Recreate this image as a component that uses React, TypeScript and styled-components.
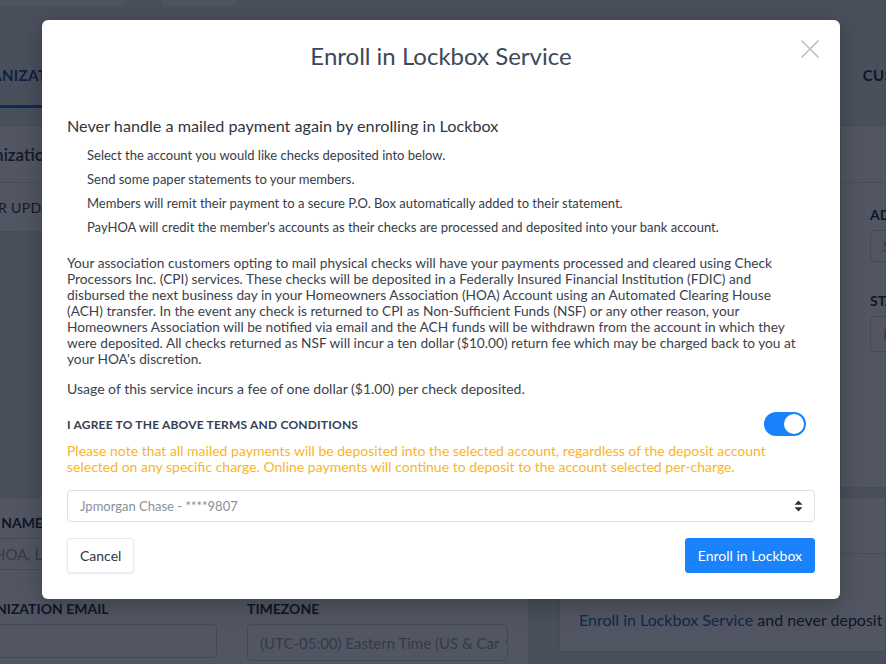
import React, { useState } from 'react';
import styled, { createGlobalStyle } from 'styled-components';

const GlobalStyle = createGlobalStyle`
  html, body {
    margin: 0;
    padding: 0;
  }
  body {
    font-family: Lato, "Liberation Sans", Arial, sans-serif;
    background: #e3e6eb;
  }
  * {
    box-sizing: border-box;
  }
`;

/* ---------- page behind the dialog ---------- */

const Page = styled.div`
  position: relative;
  width: 886px;
  height: 664px;
  overflow: hidden;
  background: #e3e6eb;
`;

const TopStrip = styled.div`
  display: flex;
  gap: 37px;
  height: 8px;
`;

const TopStub = styled.div<{ $w: number }>`
  width: ${p => p.$w}px;
  height: 6px;
  background: #f7f8fa;
  border-radius: 0 0 4px 4px;
`;

const TabBar = styled.div`
  display: flex;
  justify-content: space-between;
  align-items: flex-end;
  width: 1033px;
  height: 100px;
  margin-left: -42px;
`;

const Tab = styled.div<{ $active?: boolean }>`
  padding-bottom: 22px;
  line-height: 16px;
  font-size: 15px;
  font-weight: 700;
  letter-spacing: 0.3px;
  color: ${p => (p.$active ? '#1d4f91' : '#1f2a3d')};
  border-bottom: 3px solid ${p => (p.$active ? '#1d6fd6' : 'transparent')};
`;

const UpperGrid = styled.div`
  display: grid;
  grid-template-columns: 910px 1fr;
  margin-left: -70px;
  margin-top: 17px;
  height: 372px;
  align-items: start;
`;

const LowerGrid = styled.div`
  display: grid;
  grid-template-columns: 595px minmax(0, 1fr);
  margin-left: -67px;
`;

const Card = styled.div`
  background: #ffffff;
  border: 1px solid #dde1e7;
`;

const CardHeader = styled.div<{ $inset?: number }>`
  height: 57px;
  display: flex;
  align-items: center;
  padding: 0 28px 0 ${p => p.$inset ?? 28}px;
  font-size: 17px;
  font-weight: 600;
  color: #2a3446;
  border-bottom: 1px solid #dde1e7;
`;

const CardRow = styled.div<{ $inset?: number }>`
  height: 48px;
  display: flex;
  align-items: center;
  padding: 0 28px 0 ${p => p.$inset ?? 28}px;
  font-size: 14px;
  letter-spacing: 0.4px;
  color: #2a3446;
`;

const SideCard = styled(Card)`
  height: 363px;
`;

const SideBody = styled.div`
  padding: 23px 29px;
  display: flex;
  flex-direction: column;
`;

const FieldLabel = styled.div`
  font-size: 14px;
  font-weight: 700;
  line-height: 18px;
  color: #1f2a3d;
  margin-bottom: 6px;
`;

const FieldBox = styled.div<{ $h?: number }>`
  height: ${p => p.$h ?? 32}px;
  border: 1px solid #cfd4dc;
  border-radius: 4px;
  padding: 0 12px;
  display: flex;
  align-items: center;
  justify-content: space-between;
  gap: 6px;
  font-size: 15px;
  color: #9aa1ad;
  margin-bottom: 30px;
  white-space: nowrap;
  overflow: hidden;
`;

const FormCard = styled(Card)`
  padding: 16px 20px 0 22px;
  border-right: none;
`;

const FormRow = styled.div`
  display: grid;
  grid-template-columns: minmax(0, 1fr) minmax(0, 1fr);
  column-gap: 30px;
`;

const RightCol = styled.div`
  padding-left: 31px;
`;

const PromoCard = styled(Card)`
  height: 155px;
  box-shadow: 0 1px 3px rgba(0, 0, 0, 0.08);
  display: flex;
  flex-direction: column;
`;

const PromoHead = styled.div`
  height: 56px;
  border-bottom: 1px solid #dde1e7;
`;

const PromoText = styled.div`
  padding: 56px 19px 0;
  font-size: 16px;
  color: #1f2a3d;
  white-space: nowrap;

  a {
    color: #2264c4;
    text-decoration: none;
  }
`;

/* ---------- overlay + dialog ---------- */

const Overlay = styled.div`
  position: absolute;
  inset: 0;
  background: rgba(9, 14, 31, 0.7);
`;

const Dialog = styled.div`
  position: absolute;
  left: 42px;
  top: 20px;
  width: 798px;
  background: #ffffff;
  border-radius: 6px;
  box-shadow: 0 6px 24px rgba(0, 0, 0, 0.25);
  padding: 22px 25px 26px;
`;

const Title = styled.h2`
  margin: 0;
  text-align: center;
  font-size: 24px;
  line-height: 28px;
  font-weight: 400;
  color: #3b495b;
`;

const CloseButton = styled.button`
  position: absolute;
  top: 18px;
  right: 19px;
  width: 22px;
  height: 22px;
  padding: 0;
  border: none;
  background: none;
  cursor: pointer;
  display: flex;
  align-items: center;
  justify-content: center;
`;

const Lead = styled.h3`
  margin: 46px 0 0;
  font-size: 16.2px;
  line-height: 20px;
  font-weight: 400;
  color: #2f3640;
`;

const Steps = styled.ul`
  list-style: none;
  margin: 10px 0 0;
  padding: 0 0 0 20px;
`;

const Step = styled.li`
  font-size: 13px;
  line-height: 18px;
  color: #353c47;
  margin-bottom: 6px;
`;

const Terms = styled.p<{ $gap: number; $size: number }>`
  max-width: 740px;
  margin: ${p => p.$gap}px 0 0;
  font-size: ${p => p.$size}px;
  line-height: 16px;
  color: #3b424d;
`;

const AgreeRow = styled.div`
  margin-top: 15px;
  display: flex;
  align-items: center;
  justify-content: space-between;
  padding-right: 9px;
`;

const AgreeLabel = styled.span`
  font-size: 12px;
  font-weight: 700;
  letter-spacing: 0.2px;
  color: #354155;
`;

const Toggle = styled.button<{ $on: boolean }>`
  width: 42px;
  height: 24px;
  padding: 2px;
  border: none;
  border-radius: 12px;
  background: ${p => (p.$on ? '#1a82fb' : '#cfd4dc')};
  display: flex;
  justify-content: ${p => (p.$on ? 'flex-end' : 'flex-start')};
  cursor: pointer;
`;

const Knob = styled.span`
  width: 20px;
  height: 20px;
  border-radius: 50%;
  background: #ffffff;
`;

const Notice = styled.p`
  margin: 7px 0 0;
  font-size: 14px;
  line-height: 16px;
  color: #f7b52c;
`;

const SelectWrap = styled.div`
  position: relative;
  margin-top: 15px;
`;

const AccountSelect = styled.select`
  width: 100%;
  height: 32px;
  appearance: none;
  border: 1px solid #dcdfe4;
  border-radius: 4px;
  background: #ffffff;
  padding: 0 12px;
  font-family: inherit;
  font-size: 13px;
  color: #8b9099;
`;

const SelectArrows = styled.svg`
  position: absolute;
  right: 12px;
  top: 10px;
  pointer-events: none;
`;

const Actions = styled.div`
  margin-top: 16px;
  display: flex;
  justify-content: space-between;
`;

const Button = styled.button<{ $primary?: boolean }>`
  height: 35px;
  padding: 0 12px;
  border-radius: 3px;
  font-family: inherit;
  font-size: 14px;
  cursor: pointer;
  border: 1px solid ${p => (p.$primary ? '#1a82fb' : '#e6e8ec')};
  background: ${p => (p.$primary ? '#1a82fb' : '#ffffff')};
  color: ${p => (p.$primary ? '#ffffff' : '#2f3640')};
  box-shadow: ${p => (p.$primary ? 'none' : '0 1px 2px rgba(0, 0, 0, 0.08)')};
`;

const steps = [
  'Select the account you would like checks deposited into below.',
  'Send some paper statements to your members.',
  'Members will remit their payment to a secure P.O. Box automatically added to their statement.',
  "PayHOA will credit the member's accounts as their checks are processed and deposited into your bank account.",
];

const App: React.FC = () => {
  const [agreed, setAgreed] = useState(true);

  return (
    <Page>
      <GlobalStyle />

      <TopStrip>
        <TopStub $w={125} />
        <TopStub $w={74} />
      </TopStrip>

      <TabBar>
        <Tab $active>ORGANIZATION</Tab>
        <Tab>BANK ACCOUNTS</Tab>
        <Tab>LOCKBOX</Tab>
        <Tab>CUSTOMIZATION</Tab>
      </TabBar>

      <UpperGrid>
        <Card>
          <CardHeader $inset={26}>Organization Settings</CardHeader>
          <CardRow $inset={36}>YOUR UPDATES</CardRow>
        </Card>
        <SideCard>
          <CardHeader />
          <SideBody>
            <FieldLabel>ADDRESS</FieldLabel>
            <FieldBox>Street</FieldBox>
            <FieldLabel>STATE</FieldLabel>
            <FieldBox $h={36}>Kansas</FieldBox>
          </SideBody>
        </SideCard>
      </UpperGrid>

      <LowerGrid>
        <FormCard>
          <FieldLabel>LEGAL NAME</FieldLabel>
          <FieldBox>My HOA, LLC</FieldBox>
          <FormRow>
            <div>
              <FieldLabel>ORGANIZATION EMAIL</FieldLabel>
              <FieldBox $h={34} />
            </div>
            <div>
              <FieldLabel>TIMEZONE</FieldLabel>
              <FieldBox $h={37}>
                (UTC-05:00) Eastern Time (US &amp; Car
                <svg width="10" height="10" viewBox="0 0 10 10" style={{ flexShrink: 0 }}>
                  <path d="M1.5 3.5 L5 7 L8.5 3.5" fill="none" stroke="#333" strokeWidth="1.4" />
                </svg>
              </FieldBox>
            </div>
          </FormRow>
        </FormCard>
        <RightCol>
          <PromoCard>
            <PromoHead />
            <PromoText>
              <a href="#">Enroll in Lockbox Service</a> and never deposit a check again
            </PromoText>
          </PromoCard>
        </RightCol>
      </LowerGrid>

      <Overlay />

      <Dialog role="dialog" aria-label="Enroll in Lockbox Service">
        <CloseButton aria-label="Close">
          <svg width="20" height="20" viewBox="0 0 20 20">
            <path d="M1.5 1.5 L18.5 18.5 M18.5 1.5 L1.5 18.5" stroke="#b9c0ca" strokeWidth="1.6" fill="none" />
          </svg>
        </CloseButton>

        <Title>Enroll in Lockbox Service</Title>

        <Lead>Never handle a mailed payment again by enrolling in Lockbox</Lead>
        <Steps>
          {steps.map(s => (
            <Step key={s}>{s}</Step>
          ))}
        </Steps>

        <Terms $gap={19} $size={13.7}>
          Your association customers opting to mail physical checks will have your payments processed and
          cleared using Check Processors Inc. (CPI) services. These checks will be deposited in a Federally
          Insured Financial Institution (FDIC) and disbursed the next business day in your Homeowners
          Association (HOA) Account using an Automated Clearing House (ACH) transfer. In the event any check is
          returned to CPI as Non-Sufficient Funds (NSF) or any other reason, your Homeowners Association will be
          notified via email and the ACH funds will be withdrawn from the account in which they were deposited.
          All checks returned as NSF will incur a ten dollar ($10.00) return fee which may be charged back to
          you at your HOA's discretion.
        </Terms>
        <Terms $gap={14} $size={14}>
          Usage of this service incurs a fee of one dollar ($1.00) per check deposited.
        </Terms>

        <AgreeRow>
          <AgreeLabel>I AGREE TO THE ABOVE TERMS AND CONDITIONS</AgreeLabel>
          <Toggle $on={agreed} onClick={() => setAgreed(!agreed)} aria-pressed={agreed}>
            <Knob />
          </Toggle>
        </AgreeRow>

        <Notice>
          Please note that all mailed payments will be deposited into the selected account, regardless of the
          deposit account selected on any specific charge. Online payments will continue to deposit to the
          account selected per-charge.
        </Notice>

        <SelectWrap>
          <AccountSelect defaultValue="chase">
            <option value="chase">Jpmorgan Chase - ****9807</option>
          </AccountSelect>
          <SelectArrows width="9" height="12" viewBox="0 0 9 12">
            <path d="M4.5 0.5 L8.5 4.8 H0.5 Z M4.5 11.5 L8.5 7.2 H0.5 Z" fill="#2b2f36" />
          </SelectArrows>
        </SelectWrap>

        <Actions>
          <Button>Cancel</Button>
          <Button $primary>Enroll in Lockbox</Button>
        </Actions>
      </Dialog>
    </Page>
  );
};

export default App;
